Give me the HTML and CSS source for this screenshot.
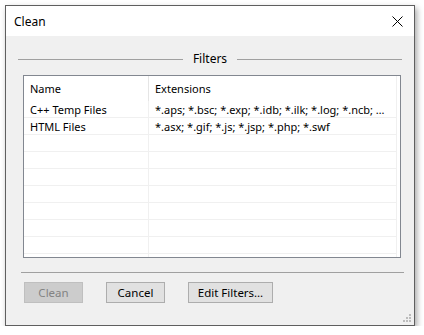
FILE: index.html
```html
<!DOCTYPE html>
<html lang="en">
<head>
    <meta charset="UTF-8">
    <title>Clean</title>
    <link rel="stylesheet" href="styles.css">
</head>
<body>

    <div class="window">
        <div class="titlebar">
            <span class="title">Clean</span>
            <span class="close">
                <svg width="11" height="11" viewBox="0 0 11 11"><path d="M0.5 0.5 L10.5 10.5 M10.5 0.5 L0.5 10.5" stroke="#000" stroke-width="1"/></svg>
            </span>
        </div>
        <div class="content">
            <div class="group-title">
                <span class="line"></span>
                <span class="label">Filters</span>
                <span class="line"></span>
            </div>

            <div class="listbox">
                <div class="row header">
                    <div class="cell name">Name</div>
                    <div class="cell ext">Extensions</div>
                </div>
                <div class="row">
                    <div class="cell name">C++ Temp Files</div>
                    <div class="cell ext">*.aps; *.bsc; *.exp; *.idb; *.ilk; *.log; *.ncb; …</div>
                </div>
                <div class="row">
                    <div class="cell name">HTML Files</div>
                    <div class="cell ext">*.asx; *.gif; *.js; *.jsp; *.php; *.swf</div>
                </div>
                <div class="row"><div class="cell name"></div><div class="cell ext"></div></div>
                <div class="row"><div class="cell name"></div><div class="cell ext"></div></div>
                <div class="row"><div class="cell name"></div><div class="cell ext"></div></div>
                <div class="row"><div class="cell name"></div><div class="cell ext"></div></div>
                <div class="row"><div class="cell name"></div><div class="cell ext"></div></div>
                <div class="row"><div class="cell name"></div><div class="cell ext"></div></div>
                <div class="row"><div class="cell name"></div><div class="cell ext"></div></div>
                <div class="row"><div class="cell name"></div><div class="cell ext"></div></div>
            </div>

            <div class="separator"></div>

            <div class="buttons">
                <button class="btn" disabled>Clean</button>
                <button class="btn">Cancel</button>
                <button class="btn wide">Edit Filters…</button>
            </div>

            <!-- size grip -->
            <svg class="grip" width="8" height="8" viewBox="0 0 8 8">
                <rect x="6" y="0" width="2" height="2" fill="#bcbcbc"/>
                <rect x="3" y="3" width="2" height="2" fill="#bcbcbc"/>
                <rect x="6" y="3" width="2" height="2" fill="#bcbcbc"/>
                <rect x="0" y="6" width="2" height="2" fill="#bcbcbc"/>
                <rect x="3" y="6" width="2" height="2" fill="#bcbcbc"/>
                <rect x="6" y="6" width="2" height="2" fill="#bcbcbc"/>
            </svg>
        </div>
    </div>

</body>
</html>
```

FILE: styles.css
```css
body {
    margin: 0;
    background-color: white;
    font-family: "Noto Sans", "Open Sans", sans-serif;
    font-size: 11px;
    color: black;
}
.window {
    margin: 5px 0 0 5px;
    width: 408px;
    height: 319px;
    border: 1px solid #5f5f5f;
    box-shadow: 2px 3px 6px rgba(0, 0, 0, 0.35);
    display: flex;
    flex-direction: column;
    background-color: #f0f0f0;
}
.titlebar {
    height: 30px;
    background-color: white;
    display: flex;
    align-items: center;
    justify-content: space-between;
    padding: 0 10px 0 8px;
}
.title {
    font-size: 12px;
}
.close {
    display: flex;
    margin-right: 1px;
}
.content {
    flex: 1;
    position: relative;
    padding: 15px 12px 0 12px;
}
.group-title {
    display: flex;
    align-items: center;
    height: 16px;
}
.group-title .line {
    flex: 1;
    height: 1px;
    background-color: #a0a0a0;
}
.group-title .label {
    padding: 0 10px;
    line-height: 16px;
    font-size: 12px;
}
.listbox {
    margin: 8px 2px 0 5px;
    width: 376px;
    height: 181px;
    border: 1px solid #828790;
    background-color: white;
    overflow: hidden;
}
.row {
    display: flex;
    height: 16px;
    border-bottom: 1px solid #f0f0f0;
    width: 373px;
}
.row.header {
    height: 25px;
    border-bottom: none;
}
.cell {
    line-height: 16px;
    padding-top: 1px;
    white-space: nowrap;
    overflow: hidden;
}
.name {
    width: 118px;
    padding-left: 6px;
    border-right: 1px solid #f0f0f0;
}
.ext {
    flex: 1;
    padding-left: 6px;
    border-right: 1px solid #f0f0f0;
}
.header .cell {
    line-height: 25px;
    padding-top: 0;
}
.header .name {
    border-right-color: #e5e5e5;
}
.separator {
    margin: 14px -2px 0 3px;
    height: 1px;
    background-color: #a0a0a0;
}
.buttons {
    display: flex;
    gap: 23px;
    margin: 9px 0 0 6px;
}
.btn {
    width: 59px;
    height: 21px;
    padding: 0;
    border: 1px solid #adadad;
    background-color: #e1e1e1;
    font-family: inherit;
    font-size: 11.5px;
    color: black;
}
.btn.wide {
    width: 85px;
}
.btn:disabled {
    background-color: #cccccc;
    border-color: #bfbfbf;
    color: #838383;
}
.grip {
    position: absolute;
    right: 3px;
    bottom: 3px;
}
```
